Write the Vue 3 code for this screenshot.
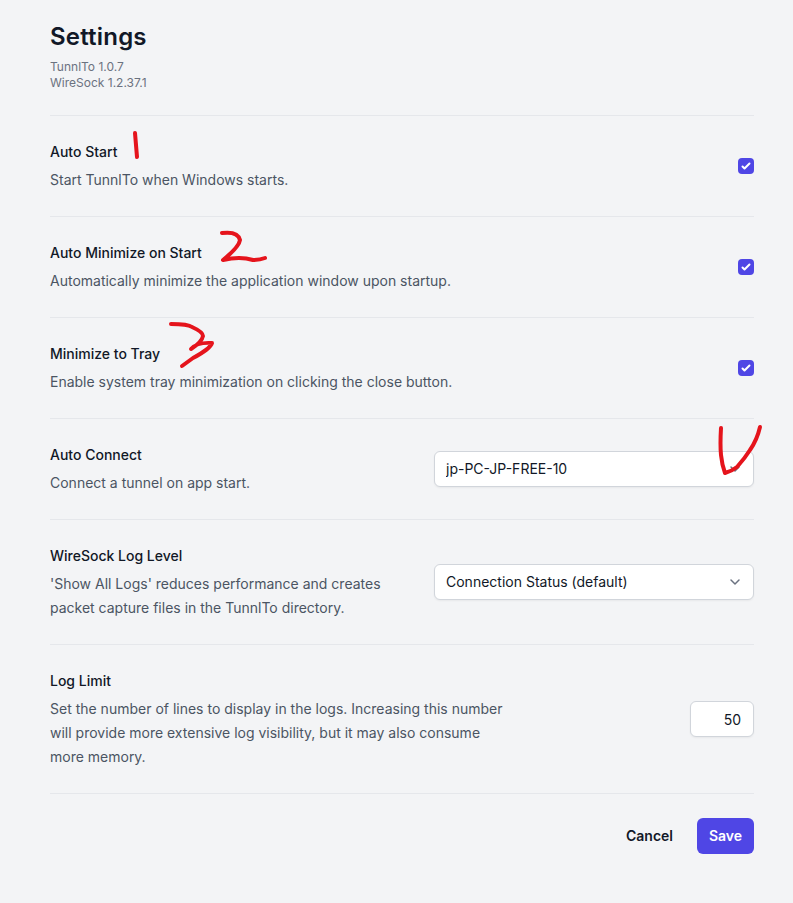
<script setup>
import { ref } from 'vue'

const toggles = [
  { title: 'Auto Start', desc: 'Start TunnlTo when Windows starts.' },
  { title: 'Auto Minimize on Start', desc: 'Automatically minimize the application window upon startup.' },
  { title: 'Minimize to Tray', desc: 'Enable system tray minimization on clicking the close button.' },
]
const tunnel = ref('jp-PC-JP-FREE-10')
const level = ref('Connection Status (default)')
const limit = ref(50)
const marks = [
  'M135 133Q136 145 137 157',
  'M222 233Q238 231 240 240Q239 247 223 260Q240 256 253 260Q260 260 265 258',
  'M171 324Q188 324 192 327Q203 332 203 336Q202 342 191 349Q197 342 212 343Q210 349 193 358L182 366',
  'M721 428Q720 445 721 455Q722 465 725 473Q732 471 737 467Q745 458 750 450Q757 440 760 427',
]
</script>

<template>
  <main class="page">
    <header class="head">
      <h1>Settings</h1>
      <p>TunnlTo 1.0.7</p>
      <p>WireSock 1.2.37.1</p>
    </header>

    <section v-for="t in toggles" :key="t.title" class="row">
      <div>
        <h2>{{ t.title }}</h2>
        <p class="desc">{{ t.desc }}</p>
      </div>
      <span class="check">
        <svg width="16" height="16" viewBox="0 0 16 16" fill="#fff">
          <path d="M12.207 4.793a1 1 0 0 1 0 1.414l-5 5a1 1 0 0 1-1.414 0l-2-2a1 1 0 0 1 1.414-1.414L6.5 9.086l4.293-4.293a1 1 0 0 1 1.414 0z" />
        </svg>
      </span>
    </section>

    <section class="row">
      <div class="narrow">
        <h2>Auto Connect</h2>
        <p class="desc">Connect a tunnel on app start.</p>
      </div>
      <div class="select">
        <select v-model="tunnel"><option>jp-PC-JP-FREE-10</option></select>
        <svg class="chev" width="20" height="20" viewBox="0 0 20 20" fill="none" stroke="#6b7280" stroke-width="1.5" stroke-linecap="round" stroke-linejoin="round"><path d="M6 8l4 4 4-4" /></svg>
      </div>
    </section>

    <section class="row">
      <div class="narrow">
        <h2>WireSock Log Level</h2>
        <p class="desc">'Show All Logs' reduces performance and creates packet capture files in the TunnlTo directory.</p>
      </div>
      <div class="select">
        <select v-model="level"><option>Connection Status (default)</option></select>
        <svg class="chev" width="20" height="20" viewBox="0 0 20 20" fill="none" stroke="#6b7280" stroke-width="1.5" stroke-linecap="round" stroke-linejoin="round"><path d="M6 8l4 4 4-4" /></svg>
      </div>
    </section>

    <section class="row">
      <div class="wide">
        <h2>Log Limit</h2>
        <p class="desc">Set the number of lines to display in the logs. Increasing this number will provide more extensive log visibility, but it may also consume more memory.</p>
      </div>
      <input v-model="limit" class="num" type="text" />
    </section>

    <footer class="foot">
      <button class="cancel" type="button">Cancel</button>
      <button class="save" type="button">Save</button>
    </footer>

    <svg class="ink" width="793" height="903" viewBox="0 0 793 903" fill="none" stroke="#e5141c" stroke-width="4" stroke-linecap="round" stroke-linejoin="round">
      <path v-for="m in marks" :key="m" :d="m" />
    </svg>
  </main>
</template>

<style>
html, body { margin: 0; background: #f3f4f6; }
</style>

<style scoped>
.page {
  position: relative;
  box-sizing: border-box;
  width: 793px;
  height: 903px;
  padding: 21px 39px 0 50px;
  background: #f3f4f6;
  font-family: Inter, "Liberation Sans", sans-serif;
  font-size: 14px;
  line-height: 24px;
  color: #111827;
}
.head { box-sizing: border-box; height: 95px; border-bottom: 1px solid #e5e7eb; }
h1 { margin: 0 0 6px; font-size: 24px; line-height: 32px; font-weight: 600; letter-spacing: 0.2px; }
.head p { margin: 0; font-size: 12px; line-height: 16px; color: #6b7280; }
.row {
  display: flex;
  align-items: center;
  justify-content: space-between;
  padding: 24px 0;
  border-bottom: 1px solid #e5e7eb;
}
h2 { margin: 0; font-size: 14px; line-height: 24px; font-weight: 500; color: #111827; }
.desc { margin: 4px 0 0; font-size: 14px; line-height: 24px; color: #4b5563; }
.narrow { width: 340px; }
.wide { width: 460px; }
.check {
  display: block;
  width: 16px;
  height: 16px;
  border-radius: 4px;
  background: #4f46e5;
}
.check svg { display: block; }
.select { position: relative; width: 320px; height: 36px; }
select, .num {
  box-sizing: border-box;
  display: block;
  height: 36px;
  border: 1px solid #d1d5db;
  border-radius: 6px;
  background: #fff;
  box-shadow: 0 1px 2px rgba(0, 0, 0, 0.05);
  font: inherit;
  color: #111827;
  outline: none;
}
select {
  width: 100%;
  padding: 0 40px 0 11px;
  appearance: none;
}
.chev { position: absolute; right: 9px; top: 8px; pointer-events: none; }
.num { width: 64px; padding: 0 12px; text-align: right; }
.foot {
  display: flex;
  justify-content: flex-end;
  align-items: center;
  gap: 24px;
  padding-top: 24px;
}
button { font: inherit; font-weight: 600; border: 0; cursor: pointer; height: 36px; }
.cancel { padding: 0; background: none; color: #111827; }
.save { width: 57px; padding: 0; border-radius: 6px; background: #4f46e5; color: #fff; }
.ink { position: absolute; left: 0; top: 0; pointer-events: none; }
</style>
